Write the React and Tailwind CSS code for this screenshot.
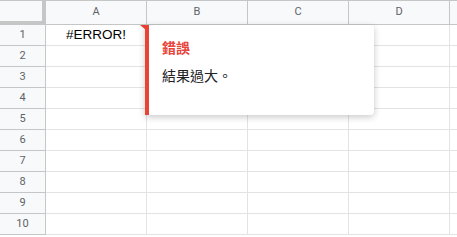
import React from 'react';

const cols = ['A', 'B', 'C', 'D'];
const rows = [1, 2, 3, 4, 5, 6, 7, 8, 9, 10];

function HeaderRow() {
  return (
    <div className='flex h-[25px] border-t border-[#c4c7c5] bg-[#f8f9fa]'>
      <div className='relative w-[46px] shrink-0 border-b-4 border-r-4 border-[#c4c7c5] bg-[#f8f9fa]' />
      {cols.map((c) => (
        <div
          key={c}
          className='flex w-[101px] shrink-0 items-center justify-center border-b border-r border-[#c4c7c5] text-[11px] text-[#5f6368]'
        >
          {c}
        </div>
      ))}
      <div className='flex-grow border-b border-[#c4c7c5]' />
    </div>
  );
}

function Row({ n }) {
  return (
    <div className='flex h-[21px]'>
      <div className='flex w-[46px] shrink-0 items-center justify-center border-b border-r border-[#c4c7c5] bg-[#f8f9fa] text-[11px] text-[#5f6368]'>
        {n}
      </div>
      {cols.map((c) => (
        <div
          key={c}
          className='relative flex w-[101px] shrink-0 items-center justify-center border-b border-r border-[#e2e3e3] text-[13.5px] text-black'
          style={{ fontFamily: '"Liberation Sans", Arial, sans-serif' }}
        >
          {n === 1 && c === 'A' ? '#ERROR!' : ''}
          {n === 1 && c === 'A' && (
            <svg className='absolute right-0 top-0' width='6' height='5' viewBox='0 0 6 5'>
              <polygon points='0,0 6,0 6,5' fill='#ea4335' />
            </svg>
          )}
        </div>
      ))}
      <div className='flex-grow border-b border-[#e2e3e3]' />
    </div>
  );
}

export default function App() {
  return (
    <div
      className='relative h-[237px] w-[457px] overflow-hidden bg-white'
      style={{ fontFamily: 'Roboto, "Liberation Sans", Arial, sans-serif' }}
    >
      <HeaderRow />
      {rows.map((n) => (
        <Row key={n} n={n} />
      ))}

      <div className='absolute left-[145px] top-[25px] h-[90px] w-[229px] rounded-r-[4px] border-l-4 border-[#ea4335] bg-white pl-[13px] pt-[12px] shadow-[0_2px_7px_rgba(0,0,0,0.22)]'>
        <div
          className='text-[14px] font-bold leading-[20px] text-[#e8453c]'
          style={{ fontFamily: '"Noto Sans CJK TC", sans-serif' }}
        >
          錯誤
        </div>
        <div
          className='mt-[8px] text-[14px] leading-[20px] text-[#202124]'
          style={{ fontFamily: '"Noto Sans CJK TC", sans-serif' }}
        >
          結果過大。
        </div>
      </div>
    </div>
  );
}
